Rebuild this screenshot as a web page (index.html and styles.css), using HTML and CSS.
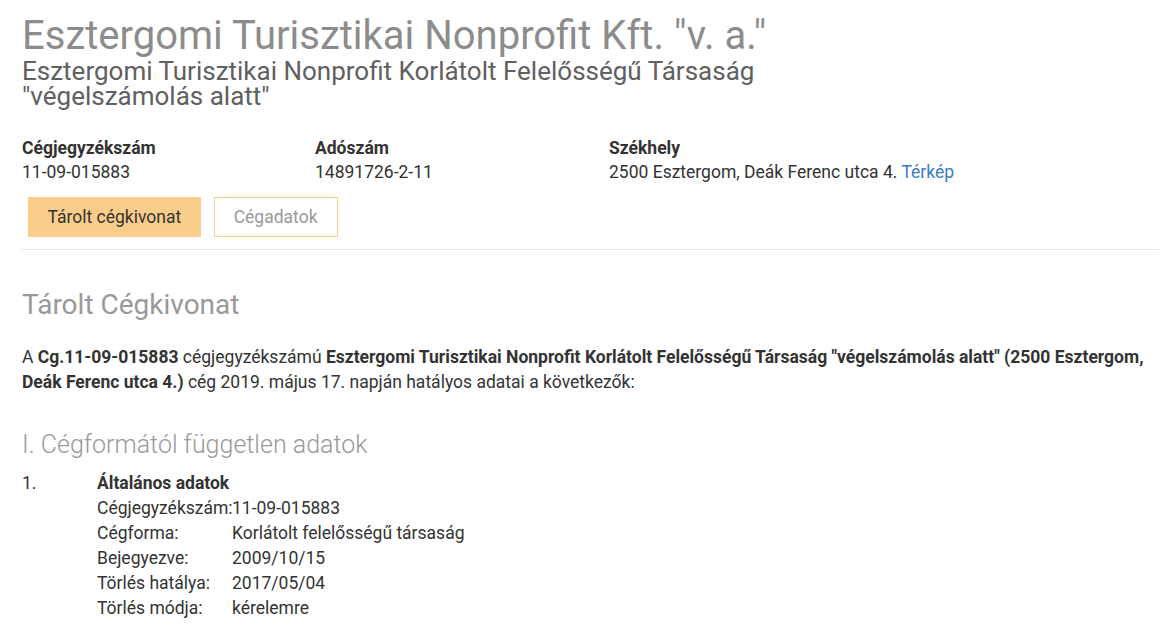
FILE: index.html
```html
<!DOCTYPE html>
<html lang="hu">
<head>
    <meta charset="UTF-8">
    <title>Esztergomi Turisztikai Nonprofit Kft. "v. a."</title>
    <link rel="stylesheet" href="styles.css">
</head>
<body>
    <div class="page">
        <div class="company-head">
            <h1>Esztergomi Turisztikai Nonprofit Kft. "v. a."</h1>
            <h2>Esztergomi Turisztikai Nonprofit Korlátolt Felelősségű Társaság<br>"végelszámolás alatt"</h2>
        </div>

        <div class="info-row">
            <div class="info-col">
                <div class="info-label">Cégjegyzékszám</div>
                <div>11-09-015883</div>
            </div>
            <div class="info-col">
                <div class="info-label">Adószám</div>
                <div>14891726-2-11</div>
            </div>
            <div class="info-col">
                <div class="info-label">Székhely</div>
                <div>2500 Esztergom, Deák Ferenc utca 4. <a href="#">Térkép</a></div>
            </div>
        </div>

        <div class="tabs">
            <button class="tab-button active">Tárolt cégkivonat</button>
            <button class="tab-button">Cégadatok</button>
        </div>
        <hr class="divider">

        <h3 class="section-title">Tárolt Cégkivonat</h3>
        <p class="intro">A <b>Cg.11-09-015883</b> cégjegyzékszámú <b>Esztergomi Turisztikai Nonprofit Korlátolt Felelősségű Társaság "végelszámolás alatt" (2500 Esztergom, Deák Ferenc utca 4.)</b> cég 2019. május 17. napján hatályos adatai a következők:</p>

        <h4 class="chapter-title">I. Cégformától független adatok</h4>

        <div class="entry">
            <div class="entry-num">1.</div>
            <div class="entry-body">
                <div class="entry-title">Általános adatok</div>
                <div class="data-row"><span class="data-key">Cégjegyzékszám:</span><span>11-09-015883</span></div>
                <div class="data-row"><span class="data-key">Cégforma:</span><span>Korlátolt felelősségű társaság</span></div>
                <div class="data-row"><span class="data-key">Bejegyezve:</span><span>2009/10/15</span></div>
                <div class="data-row"><span class="data-key">Törlés hatálya:</span><span>2017/05/04</span></div>
                <div class="data-row"><span class="data-key">Törlés módja:</span><span>kérelemre</span></div>
            </div>
        </div>
    </div>
</body>
</html>
```

FILE: styles.css
```css
body {
    margin: 0;
    padding: 0;
    font-family: Roboto, "Liberation Sans", Arial, sans-serif;
    font-size: 17.5px;
    color: #333;
    background-color: #fff;
}
.page {
    padding: 0 2px 0 22px;
}
.company-head h1 {
    margin: 13px 0 0;
    font-size: 40px;
    font-weight: 400;
    line-height: 46px;
    color: #8c8c8c;
}
.company-head h2 {
    margin: 0;
    font-size: 26px;
    font-weight: 400;
    line-height: 25px;
    color: #606060;
}
.info-row {
    display: grid;
    grid-template-columns: 293px 294px 1fr;
    margin-top: 27px;
    line-height: 24px;
}
.info-label {
    font-weight: 700;
}
.info-col a {
    color: #3a7bc8;
    text-decoration: none;
}
.tabs {
    display: flex;
    gap: 13px;
    margin: 13px 0 0 6px;
}
.tab-button {
    font-family: inherit;
    font-size: 17.5px;
    height: 40px;
    padding: 0 19px;
    border: 1px solid #fbcd8a;
    background-color: #fff;
    color: #999;
    cursor: pointer;
}
.tab-button.active {
    background-color: #fbcd8a;
    color: #333;
    padding: 0 18.5px;
}
.divider {
    border: 0;
    border-top: 1px solid #e8e8e8;
    margin: 12px 0 0;
}
.section-title {
    margin: 38px 0 0;
    font-size: 28px;
    font-weight: 400;
    line-height: 33px;
    color: #999;
}
.intro {
    margin: 24px 0 0;
    line-height: 25px;
}
.chapter-title {
    margin: 35px 0 0;
    font-size: 25px;
    font-weight: 300;
    line-height: 30px;
    color: #999;
}
.entry {
    display: flex;
    margin-top: 11px;
    line-height: 25px;
}
.entry-num {
    width: 75px;
}
.entry-title {
    font-weight: 700;
}
.data-key {
    display: inline-block;
    width: 135px;
}
```
